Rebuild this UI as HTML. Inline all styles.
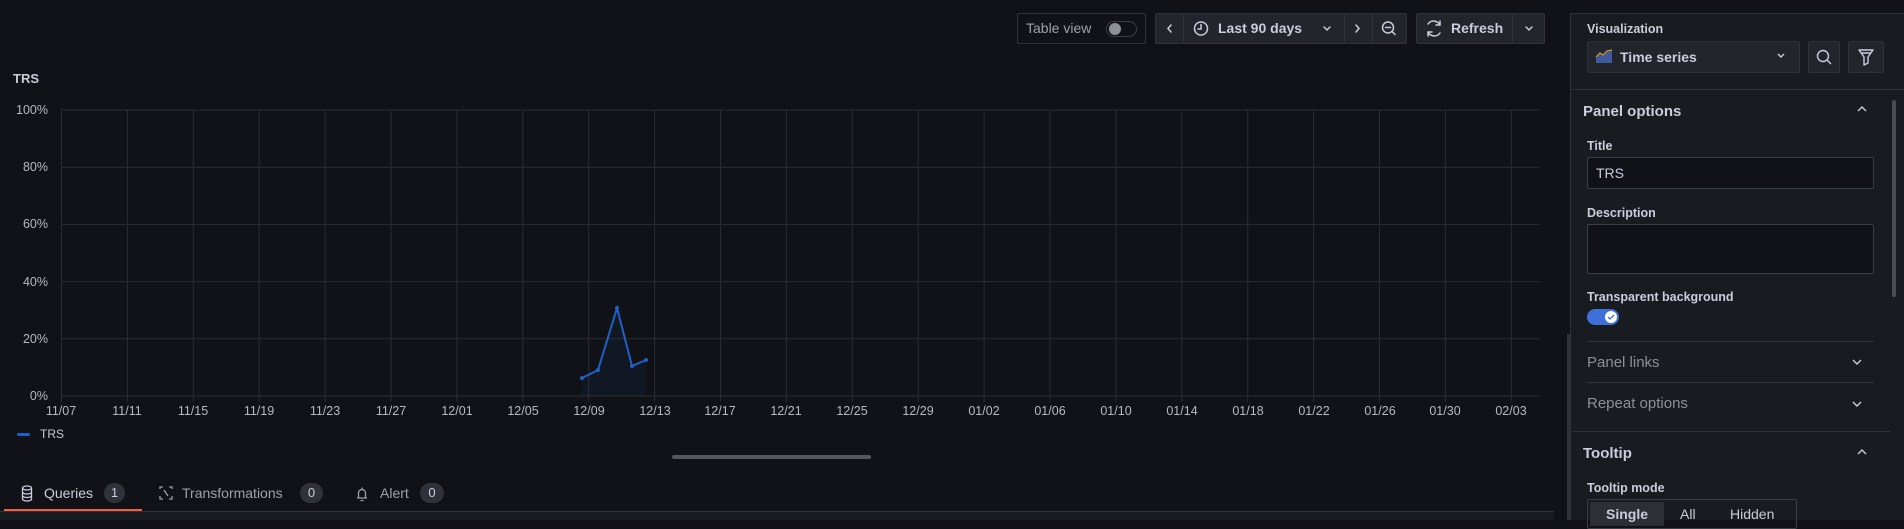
<!DOCTYPE html>
<html><head><meta charset="utf-8"><style>
*{box-sizing:border-box;margin:0;padding:0}
body{width:1904px;height:520px;background:#111217;overflow:hidden;position:relative;font-family:"Liberation Sans",sans-serif;color:#ccccdc}
.a{position:absolute}
.btn{position:absolute;background:#22252b;border:1px solid #2f3238;border-radius:2px}
.lbl{position:absolute;font-size:12.5px;font-weight:bold;color:#ccccdc}
.inp{position:absolute;background:#111217;border:1px solid #3a3d44;border-radius:2px}
.div{position:absolute;height:1px;background:#2f3238}
.badge{position:absolute;background:#2f3238;border-radius:10px;font-size:13px;color:#ccccdc;text-align:center;line-height:20px;height:20px}
</style></head><body>

<!-- toolbar -->
<div class="a" style="left:1017px;top:13px;width:129px;height:31px;border:1px solid #2f3238;border-radius:2px"></div>
<div class="a" style="left:1026px;top:20px;font-size:14px;color:#9fa1a8">Table view</div>
<div class="a" style="left:1106px;top:21px;width:31px;height:16px;border:1px solid #3a3d44;border-radius:8px"></div>
<div class="a" style="left:1109px;top:23px;width:12px;height:12px;border-radius:6px;background:#8e9098"></div>

<div class="btn" style="left:1155px;top:13px;width:252px;height:31px"></div>
<div class="a" style="left:1183px;top:14px;width:1px;height:29px;background:#2f3238"></div>
<div class="a" style="left:1344px;top:14px;width:1px;height:29px;background:#2f3238"></div>
<div class="a" style="left:1372px;top:14px;width:1px;height:29px;background:#2f3238"></div>
<svg class="a" style="left:1155px;top:13px" width="252" height="31" fill="none" stroke="#ccccdc" stroke-width="1.5" stroke-linecap="round">
<path d="M16 12 l-3 3.5 3 3.5"/>
<circle cx="46" cy="15.5" r="6.5"/><path d="M46 11.5v4.5h-3"/>
<path d="M169 14 l3 3 3-3"/>
<path d="M201 12 l3 3.5 -3 3.5"/>
<circle cx="233" cy="14.5" r="5.5"/><path d="M230.5 14.5h5M237 18.5l3 3"/>
</svg>
<div class="a" style="left:1218px;top:20px;font-size:14px;font-weight:bold;color:#ccccdc">Last 90 days</div>

<div class="btn" style="left:1416px;top:13px;width:129px;height:31px"></div>
<div class="a" style="left:1512px;top:14px;width:1px;height:29px;background:#2f3238"></div>
<svg class="a" style="left:1416px;top:13px" width="129" height="31" fill="none" stroke="#ccccdc" stroke-width="1.5" stroke-linecap="round">
<path d="M12 11 a7 7 0 0 1 12 1 M24 8v4h-4 M24 20 a7 7 0 0 1 -12 -1 M12 23v-4h4"/>
<path d="M110 14 l3 3 3-3"/>
</svg>
<div class="a" style="left:1451px;top:20px;font-size:14px;font-weight:bold;color:#ccccdc">Refresh</div>

<!-- chart -->
<div class="a" style="left:13px;top:71px;font-size:13px;font-weight:bold;color:#ccccdc">TRS</div>
<svg class="a" style="left:0;top:90px" width="1560" height="340" font-family="Liberation Sans" font-size="12.5" fill="#b8b9bf">
<g stroke="#2a2c31" stroke-width="1">
<path d="M61 20H1540M61 77.2H1540M61 134.4H1540M61 191.6H1540M61 248.8H1540M61 306H1540"/>
<path d="M61.5 20V312M127.4 20V312M193.3 20V312M259.2 20V312M325.1 20V312M391 20V312M456.9 20V312M522.8 20V312M588.7 20V312M654.6 20V312M720.5 20V312M786.4 20V312M852.3 20V312M918.2 20V312M984.1 20V312M1050 20V312M1115.9 20V312M1181.8 20V312M1247.7 20V312M1313.6 20V312M1379.5 20V312M1445.4 20V312M1511.3 20V312"/>
</g>
<g text-anchor="end">
<text x="48" y="24">100%</text><text x="48" y="81">80%</text><text x="48" y="138">60%</text><text x="48" y="196">40%</text><text x="48" y="253">20%</text><text x="48" y="310">0%</text>
</g>
<g text-anchor="middle">
<text x="61" y="325">11/07</text><text x="127" y="325">11/11</text><text x="193" y="325">11/15</text><text x="259" y="325">11/19</text><text x="325" y="325">11/23</text><text x="391" y="325">11/27</text><text x="457" y="325">12/01</text><text x="523" y="325">12/05</text><text x="589" y="325">12/09</text><text x="655" y="325">12/13</text><text x="720" y="325">12/17</text><text x="786" y="325">12/21</text><text x="852" y="325">12/25</text><text x="918" y="325">12/29</text><text x="984" y="325">01/02</text><text x="1050" y="325">01/06</text><text x="1116" y="325">01/10</text><text x="1182" y="325">01/14</text><text x="1248" y="325">01/18</text><text x="1314" y="325">01/22</text><text x="1380" y="325">01/26</text><text x="1445" y="325">01/30</text><text x="1511" y="325">02/03</text>
</g>
<path d="M582 288L598 280L617 218L632 276L646 270V306H582Z" fill="#1f60c4" fill-opacity="0.08"/>
<path d="M582 288L598 280L617 218L632 276L646 270" fill="none" stroke="#1f60c4" stroke-width="2"/>
<g fill="#1f60c4"><circle cx="582" cy="288" r="2"/><circle cx="598" cy="280" r="2"/><circle cx="617" cy="218" r="2"/><circle cx="632" cy="276" r="2"/><circle cx="646" cy="270" r="2"/></g>
</svg>
<div class="a" style="left:17px;top:433px;width:13px;height:3px;border-radius:2px;background:#1f60c4"></div>
<div class="a" style="left:40px;top:427px;font-size:12px;color:#ccccdc">TRS</div>
<div class="a" style="left:672px;top:455px;width:199px;height:4px;border-radius:2px;background:#55575c"></div>

<!-- tabs -->
<svg class="a" style="left:20px;top:484px" width="400" height="20" fill="none" stroke="#ccccdc" stroke-width="1.3">
<ellipse cx="7" cy="4" rx="4.5" ry="2"/><path d="M2.5 4v11c0 1.2 2 2 4.5 2s4.5-.8 4.5-2V4M2.5 8c0 1.2 2 2 4.5 2s4.5-.8 4.5-2M2.5 11.5c0 1.2 2 2 4.5 2s4.5-.8 4.5-2"/>
<path stroke="#9fa1a8" d="M140 5V3h3M149 3h3v2M152 12v3h-3M143 15h-3v-3M144 6l4 6"/>
<path stroke="#9fa1a8" d="M337 14h10M338.5 14v-5a3.5 3.5 0 0 1 7 0v5M340.5 16.5h3M342 3.5v2"/>
</svg>
<div class="a" style="left:44px;top:485px;font-size:14px;color:#ccccdc">Queries</div>
<div class="badge" style="left:104px;top:483px;width:21px">1</div>
<div class="a" style="left:182px;top:485px;font-size:14px;color:#9fa1a8">Transformations</div>
<div class="badge" style="left:300px;top:483px;width:23px">0</div>
<div class="a" style="left:380px;top:485px;font-size:14px;color:#9fa1a8">Alert</div>
<div class="badge" style="left:420px;top:483px;width:24px">0</div>
<div class="a" style="left:4px;top:509px;width:138px;height:2px;background:#f55f3e"></div>
<div class="a" style="left:0;top:511px;width:1554px;height:1px;background:#2f3238"></div>
<div class="a" style="left:0;top:512px;width:1554px;height:8px;background:#181b1f"></div>

<!-- right panel -->
<div class="a" style="left:1570px;top:13px;width:334px;height:507px;background:#181b1f;border-left:1px solid #2f3238;border-top:1px solid #2f3238"></div>
<div class="a" style="left:1567px;top:334px;width:3px;height:186px;background:#2f3238"></div>
<div class="lbl" style="left:1587px;top:22px">Visualization</div>
<div class="btn" style="left:1587px;top:41px;width:213px;height:32px"></div>
<svg class="a" style="left:1595px;top:49px" width="18" height="14"><path d="M1 9L5 5 8 7 12 3 17 2V14H1Z" fill="#3d5a9a"/><path d="M1 8L5 4 8 6 12 2 17 1" stroke="#e0a030" stroke-width="1.2" fill="none"/></svg>
<div class="a" style="left:1620px;top:49px;font-size:14px;font-weight:bold;color:#ccccdc">Time series</div>
<svg class="a" style="left:1776px;top:52px" width="10" height="8" fill="none" stroke="#ccccdc" stroke-width="1.4"><path d="M2 2l3 3 3-3"/></svg>
<div class="btn" style="left:1808px;top:41px;width:32px;height:32px"></div>
<svg class="a" style="left:1808px;top:41px" width="32" height="32" fill="none" stroke="#ccccdc" stroke-width="1.4"><circle cx="15" cy="15" r="5.5"/><path d="M19 19l4 4"/></svg>
<div class="btn" style="left:1848px;top:41px;width:36px;height:32px"></div>
<svg class="a" style="left:1848px;top:41px" width="36" height="32" fill="none" stroke="#ccccdc" stroke-width="1.4" stroke-linejoin="round"><path d="M11 9h14l-5 7v6l-4 2v-8z M13 12h10"/></svg>
<div class="a" style="left:1571px;top:89px;width:333px;height:1px;background:#2f3238"></div>
<div class="a" style="left:1892px;top:100px;width:4px;height:197px;border-radius:2px;background:#4a4c52"></div>

<div class="a" style="left:1583px;top:103px;font-size:15px;font-weight:bold;color:#ccccdc">Panel options</div>
<svg class="a" style="left:1856px;top:105px" width="12" height="8" fill="none" stroke="#ccccdc" stroke-width="1.4"><path d="M2 6l4-4 4 4"/></svg>
<div class="lbl" style="left:1587px;top:139px">Title</div>
<div class="inp" style="left:1587px;top:157px;width:287px;height:32px"></div>
<div class="a" style="left:1596px;top:165px;font-size:14px;color:#ccccdc">TRS</div>
<div class="lbl" style="left:1587px;top:206px">Description</div>
<div class="inp" style="left:1587px;top:224px;width:287px;height:50px"></div>
<div class="lbl" style="left:1587px;top:290px">Transparent background</div>
<div class="a" style="left:1587px;top:309px;width:32px;height:16px;border-radius:8px;background:#3d71d9"></div>
<div class="a" style="left:1605px;top:311px;width:12px;height:12px;border-radius:6px;background:#fff"></div>
<svg class="a" style="left:1605px;top:311px" width="12" height="12" fill="none" stroke="#3d71d9" stroke-width="1.3"><path d="M3 6l2 2 4-4"/></svg>
<div class="div" style="left:1587px;top:341px;width:287px"></div>
<div class="a" style="left:1587px;top:354px;font-size:15px;color:#8e9098">Panel links</div>
<svg class="a" style="left:1851px;top:358px" width="12" height="8" fill="none" stroke="#ccccdc" stroke-width="1.4"><path d="M2 2l4 4 4-4"/></svg>
<div class="div" style="left:1587px;top:382px;width:287px"></div>
<div class="a" style="left:1587px;top:395px;font-size:15px;color:#8e9098">Repeat options</div>
<svg class="a" style="left:1851px;top:400px" width="12" height="8" fill="none" stroke="#ccccdc" stroke-width="1.4"><path d="M2 2l4 4 4-4"/></svg>
<div class="div" style="left:1572px;top:431px;width:318px"></div>
<div class="a" style="left:1583px;top:445px;font-size:15px;font-weight:bold;color:#ccccdc">Tooltip</div>
<svg class="a" style="left:1856px;top:448px" width="12" height="8" fill="none" stroke="#ccccdc" stroke-width="1.4"><path d="M2 6l4-4 4 4"/></svg>
<div class="lbl" style="left:1587px;top:481px">Tooltip mode</div>
<div class="a" style="left:1587px;top:499px;width:210px;height:30px;border:1px solid #3a3d44;border-radius:2px"></div>
<div class="a" style="left:1590px;top:502px;width:74px;height:24px;background:#2c2f35"></div>
<div class="a" style="left:1606px;top:506px;font-size:14px;font-weight:bold;color:#ccccdc">Single</div>
<div class="a" style="left:1680px;top:506px;font-size:14px;color:#ccccdc">All</div>
<div class="a" style="left:1730px;top:506px;font-size:14px;color:#ccccdc">Hidden</div>
</body></html>
